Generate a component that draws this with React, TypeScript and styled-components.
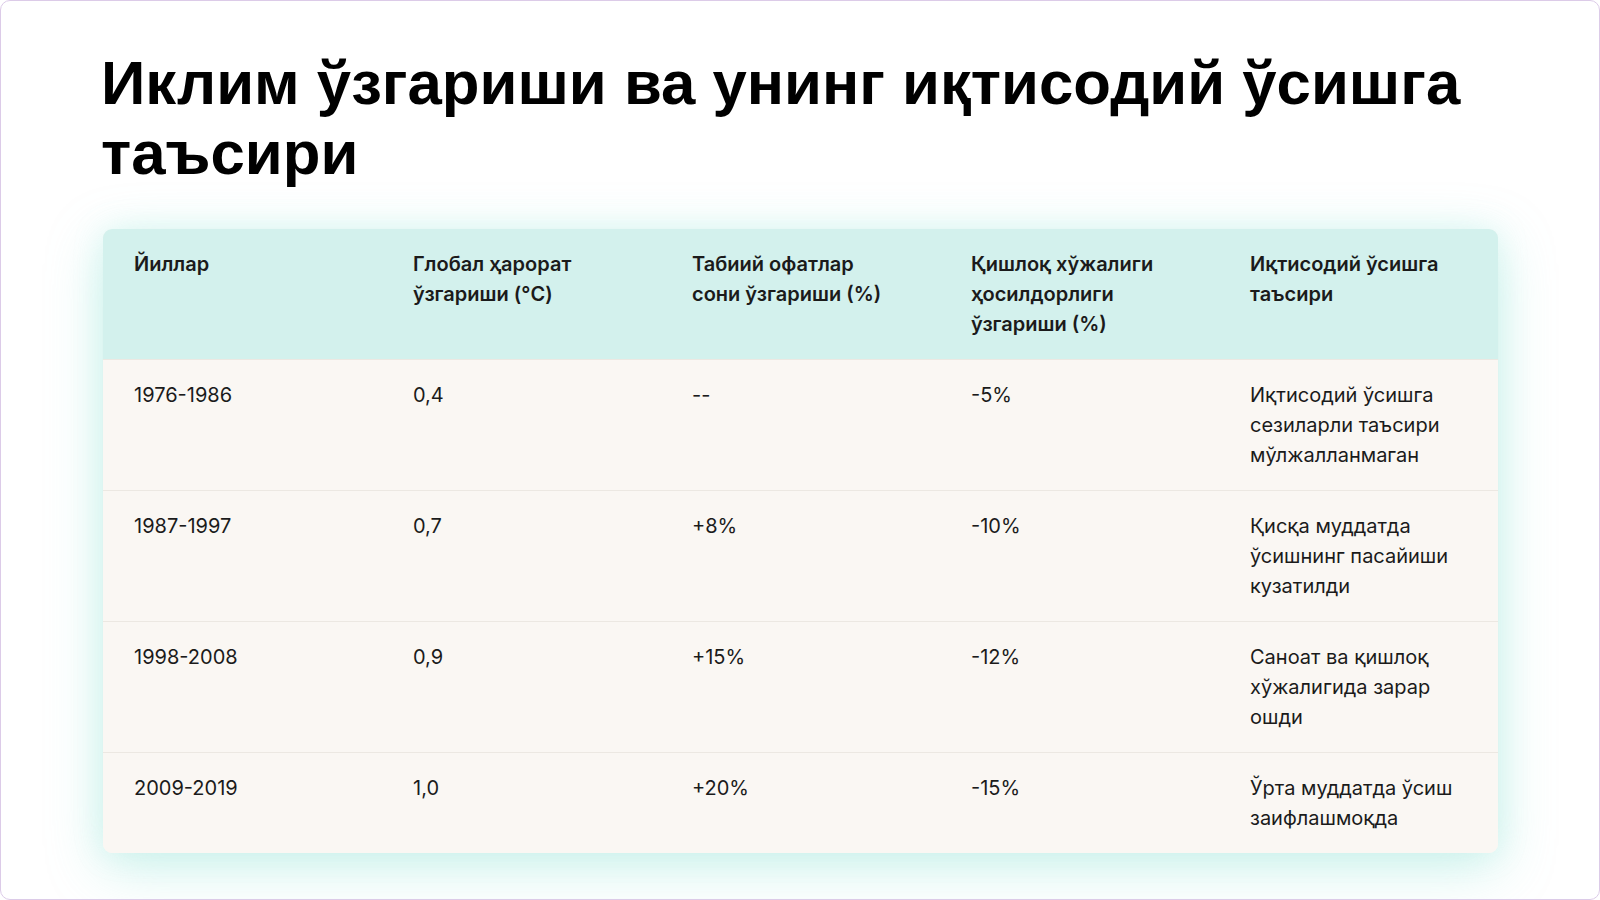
import React from "react";
import styled, { createGlobalStyle } from "styled-components";

const Global = createGlobalStyle`
  html, body { margin: 0; padding: 0; background: #ffffff; }
  * { box-sizing: border-box; }
`;

const Frame = styled.div`
  width: 1600px;
  height: 900px;
  border: 1px solid #dccbe8;
  border-radius: 10px;
  background: #ffffff;
  padding: 47px 102px 0 100px;
  overflow: hidden;
  display: flex;
  flex-direction: column;
  gap: 42px;
`;

const Title = styled.h1`
  margin: 0;
  font-family: "Liberation Sans", Arial, sans-serif;
  font-weight: 700;
  font-size: 61.7px;
  line-height: 69.5px;
  color: #000000;
  letter-spacing: 0;
`;

const Table = styled.div`
  width: 1395px;
  margin-left: 2px;
  border-radius: 9px;
  overflow: hidden;
  background: #faf7f3;
  box-shadow: 0 14px 55px rgba(120, 220, 205, 0.38), 0 0 30px rgba(160, 230, 225, 0.22);
  font-family: Inter, "Noto Sans", sans-serif;
  font-size: 20px;
  line-height: 30px;
  color: #1b1b1b;
`;

const Row = styled.div<{ $head?: boolean }>`
  display: grid;
  grid-template-columns: repeat(5, 1fr);
  background: ${(p) => (p.$head ? "#d3f1ed" : "#faf7f3")};
  font-weight: ${(p) => (p.$head ? 600 : 400)};
  & + & {
    border-top: ${(p) => (p.$head ? "none" : "1px solid #ece8e2")};
  }
`;

const Cell = styled.div`
  padding: 20px 38px 20px 31px;
`;

const head = [
  "Йиллар",
  "Глобал ҳарорат ўзгариши (°C)",
  "Табиий офатлар сони ўзгариши (%)",
  "Қишлоқ хўжалиги ҳосилдорлиги ўзгариши (%)",
  "Иқтисодий ўсишга таъсири",
];

const rows = [
  ["1976-1986", "0,4", "--", "-5%", "Иқтисодий ўсишга сезиларли таъсири мўлжалланмаган"],
  ["1987-1997", "0,7", "+8%", "-10%", "Қисқа муддатда ўсишнинг пасайиши кузатилди"],
  ["1998-2008", "0,9", "+15%", "-12%", "Саноат ва қишлоқ хўжалигида зарар ошди"],
  ["2009-2019", "1,0", "+20%", "-15%", "Ўрта муддатда ўсиш заифлашмоқда"],
];

export default function App() {
  return (
    <>
      <Global />
      <Frame>
        <Title>Иклим ўзгариши ва унинг иқтисодий ўсишга таъсири</Title>
        <Table>
          <Row $head>
            {head.map((h) => (
              <Cell key={h}>{h}</Cell>
            ))}
          </Row>
          {rows.map((r) => (
            <Row key={r[0]}>
              {r.map((c, i) => (
                <Cell key={i}>{c}</Cell>
              ))}
            </Row>
          ))}
        </Table>
      </Frame>
    </>
  );
}
